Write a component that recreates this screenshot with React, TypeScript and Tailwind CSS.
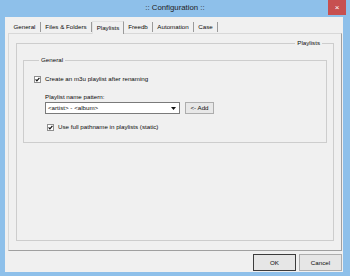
import React from 'react'

const TABS = [
  { label: 'General', w: 'w-[32px]' },
  { label: 'Files & Folders', w: 'w-[51px]' },
  { label: 'Playlists', w: 'w-[32px]', active: true },
  { label: 'Freedb', w: 'w-[29px]' },
  { label: 'Automation', w: 'w-[41px]' },
  { label: 'Case', w: 'w-[24px]' },
]

function CheckBox() {
  return (
    <svg width="7" height="7" viewBox="0 0 7 7" className="shrink-0">
      <rect x="0.5" y="0.5" width="6" height="6" fill="#fff" stroke="#8f8f8f" />
      <path d="M1.6 3.4 L2.9 4.8 L5.4 1.9" fill="none" stroke="#111" strokeWidth="1.2" />
    </svg>
  )
}

export default function App() {
  return (
    <div className="flex h-[276px] w-[350px] flex-col bg-[#8ec0ea] font-['Liberation_Sans',Arial,sans-serif] text-[6.2px] leading-[8px] text-[#0a0a0a]">
      {/* Title bar */}
      <div className="grid h-[17px] grid-cols-[1fr_auto_1fr]">
        <div />
        <div className="pt-[3px] text-[7.8px] leading-[10px] text-[#222]">:: Configuration ::</div>
        <div className="flex justify-end pr-[4px]">
          <div className="flex h-[15px] w-[18px] items-center justify-center bg-[#c75050] text-[8px] leading-[10px] text-white">
            ×
          </div>
        </div>
      </div>

      {/* Client area */}
      <div className="ml-[5px] mr-[7px] flex h-[255px] flex-col bg-[#f0f0f0]">
        {/* Tabs */}
        <div className="flex h-[16px] items-end pl-[4px]">
          {TABS.map((t) =>
            t.active ? (
              <div
                key={t.label}
                className={`${t.w} relative z-10 -mb-px flex h-[13px] items-center justify-center border-l border-r border-t border-l-[#e2e2e2] border-r-[#9a9a9a] border-t-[#e2e2e2] bg-[#f0f0f0] pb-[1px]`}
              >
                {t.label}
              </div>
            ) : (
              <div key={t.label} className={`${t.w} mb-[1px] flex h-[10px] items-center justify-center border-r border-r-[#9a9a9a]`}>
                {t.label}
              </div>
            )
          )}
        </div>

        {/* Tab page */}
        <div className="ml-[3px] flex h-[218px] w-[334px] flex-col border border-b-[#a0a0a0] border-l-[#d8d8d8] border-r-[#a0a0a0] border-t-[#d8d8d8] px-[7px] pb-[9px] pt-[5px]">
          <fieldset className="flex-1 border border-[#cdcdcd] px-[6px]">
            <legend className="ml-auto mr-[5px] px-[2px] leading-[8px]">Playlists</legend>

            <fieldset className="mt-[9px] h-[87px] border border-[#cdcdcd] pl-[10px]">
              <legend className="ml-[5px] px-[2px] leading-[8px]">General</legend>

              <div className="mt-[11px] flex h-[8px] items-center gap-[4px]">
                <CheckBox />
                <span>Create an m3u playlist after renaming</span>
              </div>

              <div className="mt-[10px] pl-[11px]">
                <div className="h-[8px]">Playlist name pattern:</div>
                <div className="mt-[1px] flex gap-[5px]">
                  <div className="flex h-[12px] w-[135px] items-center justify-between border border-[#7a7a7a] bg-white pl-[2px] pr-[3px]">
                    <span>&lt;artist&gt; - &lt;album&gt;</span>
                    <svg width="5" height="3" viewBox="0 0 5 3">
                      <path d="M0 0 H5 L2.5 3 Z" fill="#111" />
                    </svg>
                  </div>
                  <div className="flex h-[12px] w-[29px] items-center justify-center border border-[#adadad] bg-[#e8e8e8]">
                    &lt;- Add
                  </div>
                </div>
                <div className="mt-[9px] flex h-[8px] items-center gap-[4px] pl-[2px]">
                  <CheckBox />
                  <span>Use full pathname in playlists (static)</span>
                </div>
              </div>
            </fieldset>
          </fieldset>
        </div>

        {/* Buttons */}
        <div className="mt-[3px] flex justify-end gap-[3px] pr-[1px]">
          <div className="flex h-[17px] w-[43px] items-center justify-center border border-[#3c3c3c] bg-[#e6e6e6]">OK</div>
          <div className="flex h-[17px] w-[43px] items-center justify-center border border-[#adadad] bg-[#e6e6e6]">Cancel</div>
        </div>
      </div>
    </div>
  )
}
